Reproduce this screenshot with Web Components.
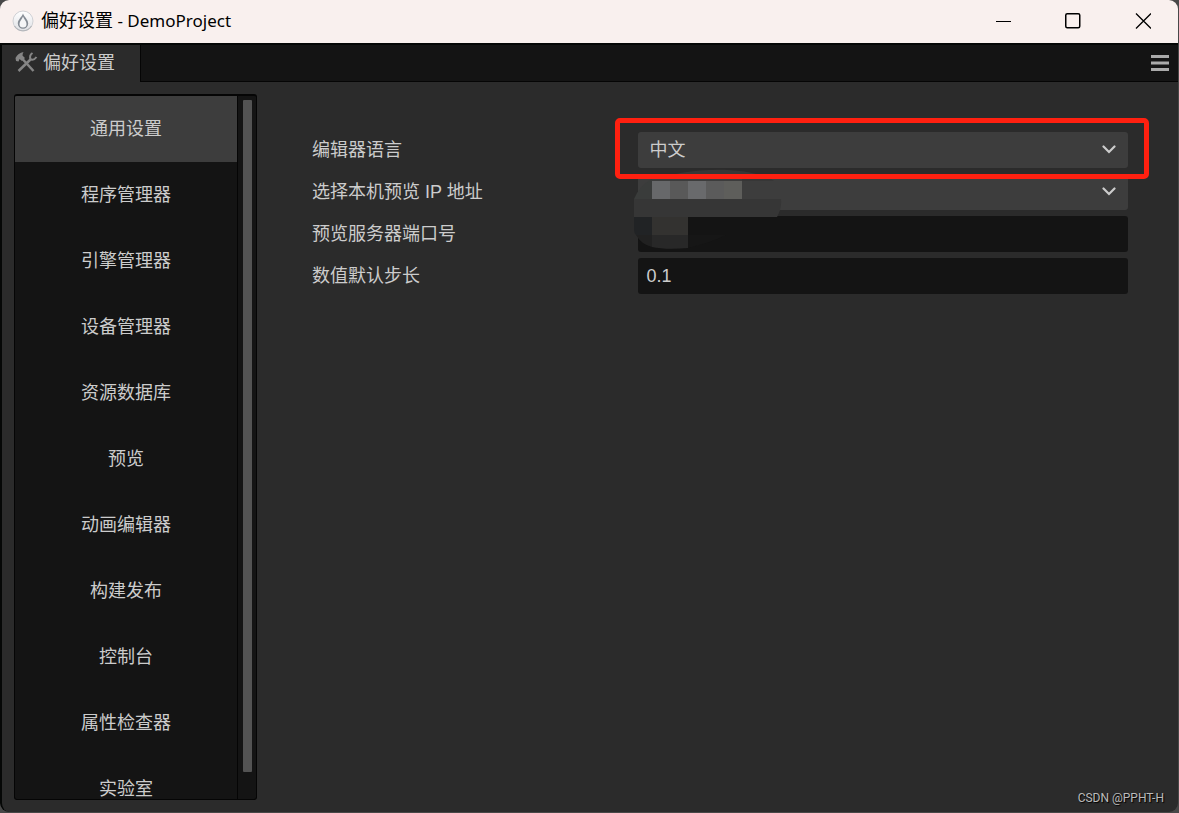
<!DOCTYPE html>
<html lang="zh-CN">
<head>
<meta charset="utf-8">
<title>偏好设置 - DemoProject</title>
<style>
html, body { margin: 0; height: 100%; background: #484848; }
body { font: 18px/24px "Liberation Sans", "Noto Sans CJK SC", sans-serif; color: #ccc; }
</style>
</head>
<body>
<pref-window></pref-window>

<template id="t-window">
<style>
:host { display: flex; flex-direction: column; box-sizing: border-box; height: 100vh; padding: 0 1px 1px 0; }
.frame { flex: 1; min-height: 0; display: flex; flex-direction: column; background: #2b2b2b; border-radius: 9px; overflow: hidden; }
.body { flex: 1; min-height: 0; display: flex; flex-direction: column; border: solid #050706; border-width: 2px 0 0 2px; border-radius: 0 0 0 9px; }
main { flex: 1; min-height: 0; display: flex; position: relative; padding: 12px 50px 12px 12px; gap: 55px; }
.mark { position: absolute; right: 14px; bottom: 6px; font-family: Roboto, sans-serif; font-size: 12px; line-height: 16px; color: #bbb; text-shadow: 1px 1px 1px #000; }
pref-form { flex: 1; }
.latin { font-size: 17px; }
</style>
<div class="frame">
  <title-bar>偏好设置<span class="latin"> - DemoProject</span></title-bar>
  <div class="body">
    <tab-bar>偏好设置</tab-bar>
    <main>
      <side-nav></side-nav>
      <pref-form></pref-form>
      <span class="mark">CSDN @PPHT-H</span>
    </main>
  </div>
</div>
</template>

<template id="t-title">
<style>
:host { display: flex; align-items: center; height: 43px; padding: 0 0 2px 12px; box-sizing: border-box; background: #f9f0ee; color: #000; font-family: "Noto Sans", "Noto Sans CJK SC", sans-serif; }
svg { display: block; }
.logo { margin-right: 7px; }
h1 { flex: 1; margin: 0; font-size: 18px; line-height: 24px; font-weight: 400; }
button { width: 70px; height: 41px; padding: 0; border: 0; background: none; display: grid; place-items: center; }
</style>
<svg class="logo" width="22" height="24" viewBox="0 0 22 24"><defs><linearGradient id="g" x2="0" y2="1"><stop stop-color="#fff"/><stop offset="1" stop-color="#dfe1e5"/></linearGradient></defs><circle cx="11" cy="12" r="10" fill="url(#g)" stroke="#d0d1d5"/><path d="M2.500 17a10 10 0 0 0 17 0" fill="none" stroke="#b4b6ba" stroke-width="1.200"/><path d="M11 4.500C9.500 8.500 5.800 10.500 5.800 14.500a5.200 5.200 0 0 0 10.400 0C16.200 10.500 12.500 8.500 11 4.500Z" fill="#858c95"/><path d="M11 7.500C10 10.500 7.500 12 7.500 15a3.500 3.500 0 0 0 7 0C14.500 12 12 10.500 11 7.500Z" fill="#f4f5f7"/></svg>
<h1><slot></slot></h1>
<button aria-label="最小化"><svg width="16" height="16"><path d="M1 8.500H16" stroke="#000"/></svg></button>
<button aria-label="最大化"><svg width="16" height="16"><rect x=".75" y=".75" width="14" height="14" rx="1.500" fill="none" stroke="#000" stroke-width="1.500"/></svg></button>
<button aria-label="关闭"><svg width="16" height="16"><path d="M1 .5l15 15m0-15l-15 15" stroke="#000" stroke-width="1.300"/></svg></button>
</template>

<template id="t-tab">
<style>
:host { display: flex; height: 37px; background: #141414; }
.tab { display: flex; align-items: center; gap: 5px; padding: 0 25px 2px 13px; background: #2b2b2b; border-right: 1px solid #050505; }
.rest { flex: 1; display: flex; align-items: center; justify-content: flex-end; padding-right: 9px; border-bottom: 1px solid #050505; }
button { border: 0; padding: 0; background: none; }
svg { display: block; }
</style>
<div class="tab">
  <svg width="23" height="22" viewBox="0 0 23 22" fill="none" stroke="#858585"><path d="M7.500 7L18.500 19" stroke-width="2.500"/><path d="M3.500 19L16 7" stroke-width="2.500"/><path d="M8.500 0C5 .5 2 3 .5 6L1 9l2.500.5L4.500 7 7 9 10 6 7.500 3.500Q7.500 1.500 8.500 0Z" fill="#858585" stroke="none"/><path d="M17.500 1Q14 3.500 15.500 7Q18.500 9 21.500 5" stroke-width="2"/></svg>
  <span><slot></slot></span>
</div>
<div class="rest"><button aria-label="菜单"><svg width="18" height="18"><path d="M0 2.500h18M0 9h18M0 15.500h18" stroke="#aaa" stroke-width="3"/></svg></button></div>
</template>

<template id="t-nav">
<style>
:host { display: flex; width: 243px; box-sizing: border-box; border: 1px solid #050505; border-top-width: 2px; border-radius: 3px; background: #141414; overflow: hidden; }
nav { flex: 1; overflow: hidden; }
.track { width: 9px; padding: 4px 4px 27px 5px; border-left: 1px solid #050505; display: flex; }
.thumb { flex: 1; border-radius: 1px; background: #535353; }
</style>
<nav>
  <nav-item selected>通用设置</nav-item>
  <nav-item>程序管理器</nav-item>
  <nav-item>引擎管理器</nav-item>
  <nav-item>设备管理器</nav-item>
  <nav-item>资源数据库</nav-item>
  <nav-item>预览</nav-item>
  <nav-item>动画编辑器</nav-item>
  <nav-item>构建发布</nav-item>
  <nav-item>控制台</nav-item>
  <nav-item>属性检查器</nav-item>
  <nav-item>实验室</nav-item>
</nav>
<div class="track"><div class="thumb"></div></div>
</template>

<template id="t-item">
<style>
:host { display: block; }
button { display: block; width: 100%; height: 66px; padding: 0; border: 0; background: none; color: #ccc; font: inherit; text-align: center; }
:host([selected]) button { background: #3d3d3d; }
</style>
<button><slot></slot></button>
</template>

<template id="t-form">
<style>
:host { display: flex; flex-direction: column; gap: 6px; padding-top: 38px; }
</style>
<pref-row label="编辑器语言" kind="select" value="中文" marked></pref-row>
<pref-row label="选择本机预览 IP 地址" kind="select" value="" masked></pref-row>
<pref-row label="预览服务器端口号" value=""></pref-row>
<pref-row label="数值默认步长" value="0.1"></pref-row>
</template>

<template id="t-row">
<style>
:host { display: grid; grid-template-columns: 2fr 3fr; align-items: center; }
:host([marked]) { position: relative; z-index: 2; }
:host([masked]) { position: relative; z-index: 1; }
.field { position: relative; height: 36px; }
select, input { appearance: none; display: block; box-sizing: border-box; width: 100%; height: 36px; margin: 0; border: 0; border-radius: 3px; outline: 0; color: #ccc; font: inherit; }
select { padding: 0 40px 0 11px; background: #3d3d3d; }
input { padding: 0 8px; background: #141414; }
.chev { position: absolute; right: 12px; top: 13px; pointer-events: none; }
.frame { position: absolute; inset: -14px -21px -11px -23px; border: 5px solid #ff2010; border-radius: 5px; pointer-events: none; }
.mask { position: absolute; left: -4px; top: -6px; pointer-events: none; }
</style>
<label for="c"></label>
<div class="field"></div>
</template>

<script>
class Base extends HTMLElement {
  constructor() {
    super();
    this.attachShadow({ mode: 'open' }).append(document.getElementById(this.constructor.template).content.cloneNode(true));
  }
}
const define = (name, template) => customElements.define(name, class extends Base { static template = template; });

const chevron = '<svg class="chev" width="14" height="9" viewBox="0 0 14 9"><path d="M1.500 1.500L7 7l5.500-5.500" fill="none" stroke="#ccc" stroke-width="2.200" stroke-linecap="round"/></svg>';
const mosaic = `<svg class="mask" width="148" height="82" viewBox="0 0 148 82">
<path d="M18 13C48 0 112-4 140 13Z" fill="#373737"/>
<path d="M0 31Q6 17 18 11V31Z" fill="#3a3c3b"/>
<path d="M18 11H108V31H18Z" fill="#3d3d3d"/>
<path d="M18 13h18v18H18z" fill="#67686a"/><path d="M36 13h18v18H36z" fill="#595959"/><path d="M54 13h18v18H54z" fill="#696a6c"/><path d="M72 13h18v18H72z" fill="#5b5b5b"/><path d="M90 13h18v18H90z" fill="#5e5e5b"/>
<path d="M0 31H147Q148 40 143 49H0Z" fill="#363636"/>
<path d="M54 67H92Q76 75 54 80Z" fill="#161616"/>
<path d="M0 49H18V67H2Q0 65 0 62Z" fill="#212325"/>
<path d="M18 49H54V67H18Z" fill="#333230"/>
<path d="M2 67H18V79Q7 76 2 67Z" fill="#212121"/>
<path d="M18 67H54V80Q32 82 18 79Z" fill="#282828"/>
</svg>`;

class PrefRow extends Base {
  static template = 't-row';
  connectedCallback() {
    const root = this.shadowRoot, field = root.querySelector('.field');
    const value = this.getAttribute('value');
    root.querySelector('label').textContent = this.getAttribute('label');
    field.innerHTML = this.getAttribute('kind') === 'select'
      ? `<select id="c"><option>${value}</option></select>${chevron}`
      : `<input id="c" type="text" value="${value}">`;
    if (this.hasAttribute('masked')) field.insertAdjacentHTML('beforeend', mosaic);
    if (this.hasAttribute('marked')) field.insertAdjacentHTML('beforeend', '<div class="frame"></div>');
  }
}
customElements.define('pref-row', PrefRow);
define('nav-item', 't-item');
define('pref-form', 't-form');
define('side-nav', 't-nav');
define('tab-bar', 't-tab');
define('title-bar', 't-title');
define('pref-window', 't-window');
</script>
</body>
</html>
